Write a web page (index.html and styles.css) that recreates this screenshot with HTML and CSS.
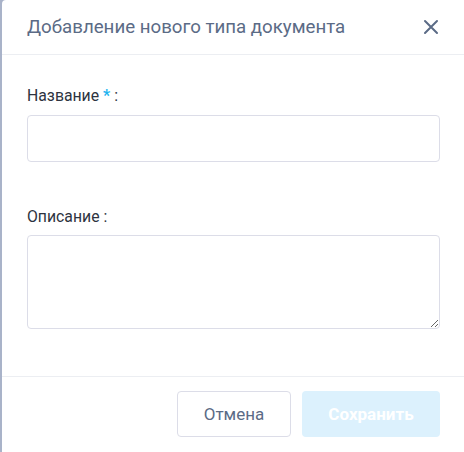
FILE: index.html
```html
<!DOCTYPE html>
<html lang="ru">
<head>
    <meta charset="UTF-8">
    <title>Добавление нового типа документа</title>
    <link rel="stylesheet" href="styles.css">
</head>
<body>
    <div class="modal">
        <div class="modal-header">
            <h2 class="modal-title">Добавление нового типа документа</h2>
            <button class="close-button" type="button" aria-label="Закрыть">
                <svg width="16" height="16" viewBox="0 0 16 16">
                    <path d="M2 2 L14 14 M14 2 L2 14" stroke="#5b6b86" stroke-width="2" stroke-linecap="round"/>
                </svg>
            </button>
        </div>

        <form class="modal-body">
            <label class="field-label" for="name-input">Название <span class="required">*</span> :</label>
            <input type="text" id="name-input" class="text-input">

            <label class="field-label second" for="desc-input">Описание :</label>
            <textarea id="desc-input" class="text-area"></textarea>
        </form>

        <div class="modal-footer">
            <button type="button" class="btn btn-cancel">Отмена</button>
            <button type="button" class="btn btn-save" disabled>Сохранить</button>
        </div>
    </div>
</body>
</html>
```

FILE: styles.css
```css
body {
    margin: 0;
    background-color: #a9b3c9;
    font-family: Roboto, "Noto Sans", sans-serif;
}
.modal {
    margin-left: 2px;
    height: 452px;
    background: #fff;
    border-top-left-radius: 4px;
    display: flex;
    flex-direction: column;
}
.modal-header {
    height: 54px;
    padding: 0 24px 0 25px;
    display: flex;
    justify-content: space-between;
    align-items: center;
    border-bottom: 1px solid #eceef2;
}
.modal-title {
    margin: 0;
    font-size: 18.7px;
    font-weight: 400;
    color: #5b6b86;
}
.close-button {
    background: none;
    border: none;
    padding: 0;
    width: 16px;
    height: 16px;
    margin-right: 1px;
    cursor: pointer;
}
.close-button svg { display: block; }
.modal-body {
    padding: 31px 24px 0 25px;
    display: flex;
    flex-direction: column;
    flex-grow: 1;
}
.field-label {
    font-size: 15.8px;
    line-height: 20px;
    color: #2d3340;
    margin-bottom: 9px;
}
.field-label.second { margin-top: 45px; margin-bottom: 8px; }
.required { color: #1fb4f0; font-weight: 700; }
.text-input,
.text-area {
    box-sizing: border-box;
    border: 1px solid #dcdde8;
    border-radius: 4px;
    font-family: inherit;
    font-size: 15px;
}
.text-input { height: 47px; }
.text-area { height: 94px; resize: vertical; }
.modal-footer {
    border-top: 1px solid #eceef2;
    padding: 14px 24px 15px 0;
    display: flex;
    justify-content: flex-end;
    gap: 11px;
}
.btn {
    height: 46px;
    border-radius: 4px;
    font-family: inherit;
    font-size: 17px;
}
.btn-cancel {
    width: 114px;
    background: #fff;
    border: 1px solid #dcdde8;
    color: #5b6b86;
}
.btn-save {
    width: 138px;
    background: #dcf1fd;
    border: none;
    color: #fff;
    font-weight: 700;
}
```
